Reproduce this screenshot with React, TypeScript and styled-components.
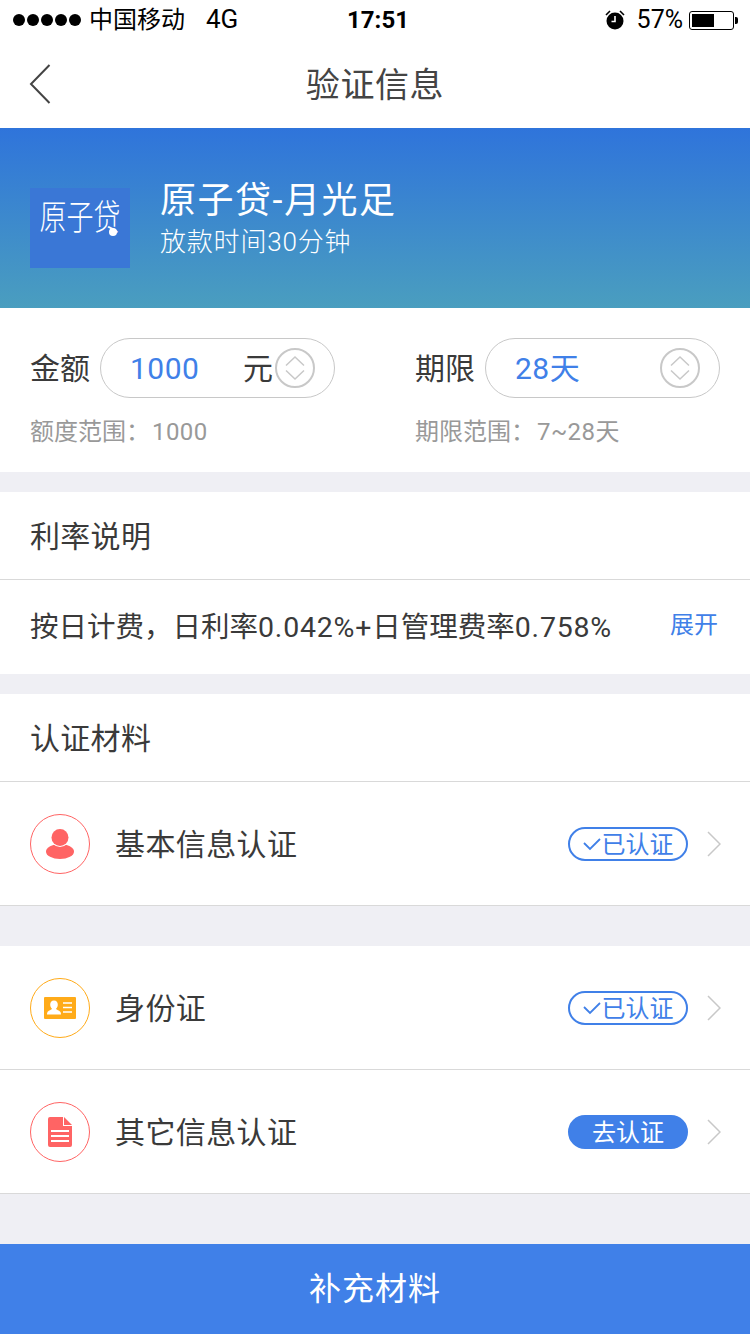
import React from 'react'
import styled, { createGlobalStyle } from 'styled-components'

const GlobalStyle = createGlobalStyle`
  html, body {
    margin: 0;
    padding: 0;
    background: #efeff4;
    font-family: Roboto, 'Noto Sans CJK SC', sans-serif;
    line-height: 1.2;
  }
  * { box-sizing: border-box; }
`

const AlarmIcon = () => (
  <svg width="22" height="22" viewBox="0 0 22 22">
    <circle cx="11" cy="12" r="8.5" fill="#000" />
    <path d="M11 7v5.500H7.500" fill="none" stroke="#fff" strokeWidth="1.600" />
    <path d="M2 6l4-4M20 6l-4-4" fill="none" stroke="#000" strokeWidth="1.600" />
  </svg>
)

const Stepper = () => (
  <StepCircle>
    <svg width="24" height="26" viewBox="0 0 24 26" fill="none" stroke="#c8c8c8" strokeWidth="1.500">
      <path d="M3 10.500L12 2l9 8.500" />
      <path d="M3 15.500l9 8.500 9-8.500" />
    </svg>
  </StepCircle>
)

const PersonIcon = () => (
  <svg width="28" height="30" viewBox="0 0 28 30" fill="#ff6464">
    <ellipse cx="14" cy="22.500" rx="14" ry="7.500" />
    <circle cx="14" cy="8.500" r="9.500" fill="#fff" />
    <circle cx="14" cy="8.500" r="8.500" />
  </svg>
)

const CardIcon = () => (
  <svg width="32" height="22" viewBox="0 0 32 22">
    <rect width="32" height="22" rx="1" fill="#ffab19" />
    <path d="M10 3.500c2.600 0 3.800 2 3.800 4.200 0 1.700-.8 3.200-1.800 4 .2 1 3.500 1.700 4.500 3.300.4.700.5 1.500.5 2.500H3c0-1 .1-1.800.5-2.500 1-1.600 4.300-2.300 4.500-3.300-1-.8-1.800-2.300-1.800-4C6.200 5.500 7.400 3.500 10 3.500z" fill="#fff" />
    <path d="M19 6h9M19 10.500h9M19 15h9" stroke="#fff" strokeWidth="1.600" />
  </svg>
)

const DocIcon = () => (
  <svg width="24" height="30" viewBox="0 0 24 30">
    <path d="M2 0h13v9h9v19a2 2 0 0 1-2 2H2a2 2 0 0 1-2-2V2a2 2 0 0 1 2-2z" fill="#ff6464" />
    <path d="M16 0l8 8h-8z" fill="#ff6464" />
    <path d="M3 14h18M3 19h18M3 24h18" stroke="#fff" strokeWidth="1.800" />
  </svg>
)

const Chevron = () => (
  <svg width="14" height="26" viewBox="0 0 14 26" fill="none" stroke="#c8c8c8" strokeWidth="1.500">
    <path d="M1 1l12 12L1 25" />
  </svg>
)

const Check = () => (
  <svg width="18" height="14" viewBox="0 0 18 14" fill="none" stroke="#4080e8" strokeWidth="1.800">
    <path d="M1 6l6 6L17 2" />
  </svg>
)

type ItemProps = {
  icon: React.ReactNode
  color: string
  title: string
  done: boolean
}

const MaterialItem = ({ icon, color, title, done }: ItemProps) => (
  <ItemRow>
    <IconRing $color={color}>{icon}</IconRing>
    <ItemTitle>{title}</ItemTitle>
    {done ? (
      <Badge>
        <Check />
        <BadgeLabel>已认证</BadgeLabel>
      </Badge>
    ) : (
      <Badge $solid>
        <BadgeLabel>去认证</BadgeLabel>
      </Badge>
    )}
    <ChevronBox>
      <Chevron />
    </ChevronBox>
  </ItemRow>
)

export default function App() {
  return (
    <Page>
      <GlobalStyle />
      <StatusBar>
        <Carrier>
          <Dots>
            {[0, 1, 2, 3, 4].map((i) => (
              <Dot key={i} />
            ))}
          </Dots>
          <span>中国移动</span>
          <Network>4G</Network>
        </Carrier>
        <Clock>17:51</Clock>
        <StatusRight>
          <AlarmIcon />
          <Percent>57%</Percent>
          <Battery>
            <BatteryFill />
          </Battery>
          <BatteryCap />
        </StatusRight>
      </StatusBar>

      <NavBar>
        <BackButton>
          <svg width="22" height="40" viewBox="0 0 22 40" fill="none" stroke="#444" strokeWidth="2">
            <path d="M20.500 1L2 20l18.500 19" />
          </svg>
        </BackButton>
        <NavTitle>验证信息</NavTitle>
      </NavBar>

      <Banner>
        <Logo>
          <LogoText>原子贷</LogoText>
          <LogoDot />
        </Logo>
        <BannerText>
          <ProductName>原子贷-月光足</ProductName>
          <ProductNote>放款时间30分钟</ProductNote>
        </BannerText>
      </Banner>

      <FormPanel>
        <Field>
          <FieldRow>
            <FieldLabel>金额</FieldLabel>
            <Pill>
              <PillValue>1000</PillValue>
              <PillUnit>元</PillUnit>
              <Stepper />
            </Pill>
          </FieldRow>
          <FieldHint>
            额度范围：<HintValue>1000</HintValue>
          </FieldHint>
        </Field>
        <Field>
          <FieldRow>
            <FieldLabel>期限</FieldLabel>
            <Pill>
              <PillValue>28天</PillValue>
              <Stepper />
            </Pill>
          </FieldRow>
          <FieldHint>
            期限范围：<HintValue>7~28天</HintValue>
          </FieldHint>
        </Field>
      </FormPanel>

      <Section>
        <SectionHeader>利率说明</SectionHeader>
        <RateRow>
          <RateText>
            按日计费，日利率<RateNumber>0.042%+</RateNumber>日管理费率<RateNumber>0.758%</RateNumber>
          </RateText>
          <ExpandLink>展开</ExpandLink>
        </RateRow>
      </Section>

      <Section>
        <SectionHeader>认证材料</SectionHeader>
        <MaterialItem icon={<PersonIcon />} color="#ff6464" title="基本信息认证" done />
      </Section>

      <ItemGroup>
        <MaterialItem icon={<CardIcon />} color="#ffab19" title="身份证" done />
        <MaterialItem icon={<DocIcon />} color="#ff6464" title="其它信息认证" done={false} />
      </ItemGroup>

      <Spacer />
      <SubmitButton>补充材料</SubmitButton>
    </Page>
  )
}

const Page = styled.div`
  width: 750px;
  height: 1334px;
  display: flex;
  flex-direction: column;
  background: #efeff4;
  overflow: hidden;
  color: #3a3a3a;
`

const StatusBar = styled.div`
  height: 40px;
  background: #fff;
  display: grid;
  grid-template-columns: 1fr auto 1fr;
  align-items: center;
  padding: 0 13px;
  color: #000;
  font-size: 24px;
`

const Carrier = styled.div`
  display: flex;
  align-items: center;
`

const Dots = styled.div`
  display: flex;
  gap: 2px;
  margin-right: 8px;
`

const Dot = styled.i`
  width: 12px;
  height: 12px;
  border-radius: 50%;
  background: #000;
`

const Network = styled.span`
  margin-left: 21px;
  font-size: 26px;
`

const Clock = styled.div`
  font-size: 24px;
  font-weight: 700;
  margin-left: 6px;
`

const StatusRight = styled.div`
  display: flex;
  align-items: center;
  justify-content: flex-end;
`

const Percent = styled.span`
  margin-left: 11px;
  margin-right: 6px;
  font-size: 25px;
`

const Battery = styled.div`
  width: 45px;
  height: 19px;
  border: 1px solid #000;
  border-radius: 3px;
  padding: 2px;
`

const BatteryFill = styled.div`
  width: 57%;
  height: 100%;
  background: #000;
`

const BatteryCap = styled.div`
  width: 3px;
  height: 7px;
  margin-left: 1px;
  margin-right: -1px;
  background: #000;
  border-radius: 0 2px 2px 0;
`

const NavBar = styled.div`
  height: 88px;
  background: #fff;
  display: flex;
  align-items: center;
  justify-content: center;
  position: relative;
`

const BackButton = styled.div`
  position: absolute;
  left: 29px;
  top: 24px;
  line-height: 0;
`

const NavTitle = styled.div`
  font-size: 34px;
  letter-spacing: 0.6px;
  margin-top: 2px;
  color: #444;
`

const Banner = styled.div`
  height: 180px;
  padding: 60px 30px 40px;
  display: flex;
  align-items: flex-start;
  background: linear-gradient(180deg, #2f74db 0%, #4a9ebf 100%);
  color: #fff;
`

const Logo = styled.div`
  width: 100px;
  height: 80px;
  flex: none;
  background: #3a77d6;
  display: flex;
  align-items: center;
  justify-content: center;
  position: relative;
  overflow: hidden;
`

const LogoText = styled.span`
  font-size: 27px;
  font-weight: 300;
  white-space: nowrap;
  transform: scaleY(1.3);
  margin-top: -20px;
`

const LogoDot = styled.i`
  position: absolute;
  right: 13px;
  bottom: 32px;
  width: 8px;
  height: 8px;
  border-radius: 50%;
  background: #fff;
`

const BannerText = styled.div`
  margin-left: 30px;
  margin-top: -9px;
`

const ProductName = styled.div`
  font-size: 36px;
  line-height: 44px;
  letter-spacing: 1.5px;
`

const ProductNote = styled.div`
  font-size: 26px;
  line-height: 32px;
  margin-top: 3px;
  font-weight: 300;
  letter-spacing: 0.8px;
`

const FormPanel = styled.div`
  height: 164px;
  background: #fff;
  padding: 30px 30px 0;
  display: flex;
  justify-content: space-between;
`

const Field = styled.div`
  display: flex;
  flex-direction: column;
`

const FieldRow = styled.div`
  display: flex;
  align-items: center;
  gap: 10px;
`

const FieldLabel = styled.span`
  font-size: 30px;
  margin-top: 2px;
`

const Pill = styled.div`
  width: 235px;
  height: 60px;
  border: 1px solid #c8c8c8;
  border-radius: 30px;
  display: flex;
  align-items: center;
  padding: 0 19px 0 29px;
  position: relative;
`

const PillValue = styled.span`
  font-size: 30px;
  letter-spacing: 0.5px;
  margin-top: 2px;
  color: #4080e8;
  flex: 1;
`

const PillUnit = styled.span`
  font-size: 30px;
  margin-top: 2px;
  margin-right: 2px;
`

const StepCircle = styled.div`
  width: 40px;
  height: 40px;
  border: 2px solid #c8c8c8;
  border-radius: 50%;
  display: flex;
  align-items: center;
  justify-content: center;
  flex: none;
`

const FieldHint = styled.div`
  margin-top: 20px;
  font-size: 24px;
  color: #999;
`

const HintValue = styled.span`
  margin-left: 2px;
  letter-spacing: 0.4px;
`

const Section = styled.div`
  margin-top: 20px;
  background: #fff;
`

const SectionHeader = styled.div`
  height: 88px;
  border-bottom: 1px solid #d9d9d9;
  padding: 3px 0 0 30px;
  display: flex;
  align-items: center;
  font-size: 30px;
  letter-spacing: 0.3px;
`

const RateRow = styled.div`
  height: 94px;
  padding: 3px 32px 0 30px;
  display: flex;
  align-items: center;
  justify-content: space-between;
`

const RateText = styled.div`
  font-size: 28.5px;
`

const RateNumber = styled.span`
  letter-spacing: 0.8px;
`

const ExpandLink = styled.div`
  font-size: 24px;
  color: #4080e8;
  margin-top: -6px;
`

const ItemGroup = styled.div`
  margin-top: 40px;
  background: #fff;
`

const ItemRow = styled.div`
  height: 124px;
  padding: 0 30px;
  display: flex;
  align-items: center;
  border-bottom: 1px solid #d9d9d9;
`

const IconRing = styled.div<{ $color: string }>`
  width: 60px;
  height: 60px;
  flex: none;
  border: 1px solid ${(p) => p.$color};
  border-radius: 50%;
  display: flex;
  align-items: center;
  justify-content: center;
`

const ItemTitle = styled.div`
  flex: 1;
  margin-left: 25px;
  margin-top: 2px;
  font-size: 30px;
  letter-spacing: 0.4px;
`

const Badge = styled.div<{ $solid?: boolean }>`
  width: 120px;
  height: 34px;
  border: 2px solid #4080e8;
  border-radius: 17px;
  display: flex;
  align-items: center;
  justify-content: center;
  gap: 1px;
  font-size: 24px;
  color: ${(p) => (p.$solid ? '#fff' : '#4080e8')};
  background: ${(p) => (p.$solid ? '#4080e8' : '#fff')};
`

const BadgeLabel = styled.span`
  margin-top: 3px;
`

const ChevronBox = styled.div`
  margin-left: 19px;
  margin-right: -1px;
  line-height: 0;
`

const Spacer = styled.div`
  flex: 1;
`

const SubmitButton = styled.div`
  height: 90px;
  background: #4080e8;
  color: #fff;
  font-size: 32px;
  letter-spacing: 1px;
  display: flex;
  align-items: center;
  justify-content: center;
`
